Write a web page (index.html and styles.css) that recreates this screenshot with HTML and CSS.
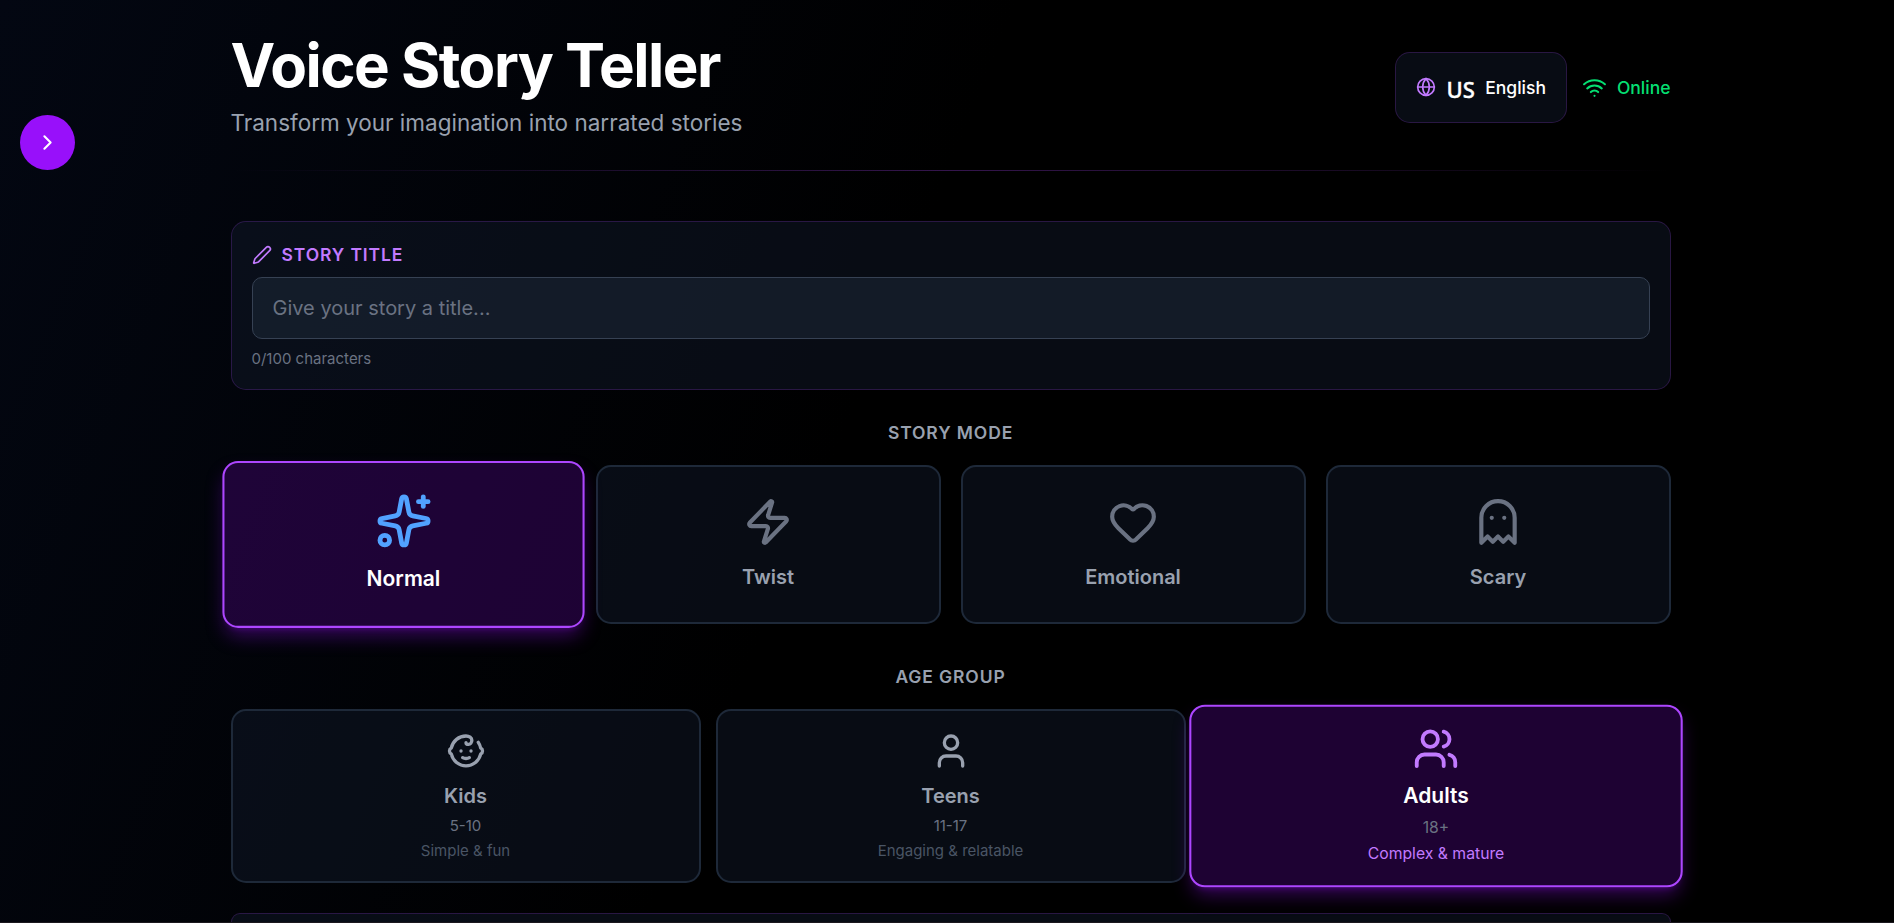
FILE: index.html
```
<!DOCTYPE html>
<html lang="en">
<head>
<meta charset="utf-8">
<title>Voice Story Teller</title>
<link rel="stylesheet" href="styles.css">
</head>
<body>
<button class="drawer-toggle" aria-label="Open menu"><svg class="icon icon-md" viewBox="0 0 24 24"><path d="m9 18 6-6-6-6"/></svg></button>
<main class="page">
  <header class="header">
    <div>
      <h1 class="title">Voice Story Teller</h1>
      <p class="subtitle">Transform your imagination into narrated stories</p>
    </div>
    <div class="header-tools">
      <button class="language">
        <svg class="icon icon-sm accent" viewBox="0 0 24 24"><circle cx="12" cy="12" r="10"/><path d="M12 2a14.5 14.5 0 0 0 0 20 14.5 14.5 0 0 0 0-20"/><path d="M2 12h20"/></svg>
        <span class="flag">US</span>
        <span>English</span>
      </button>
      <div class="status">
        <svg class="icon icon-md" viewBox="0 0 24 24"><path d="M12 20h.01"/><path d="M2 8.82a15 15 0 0 1 20 0"/><path d="M5 12.859a10 10 0 0 1 14 0"/><path d="M8.5 16.429a5 5 0 0 1 7 0"/></svg>
        <span>Online</span>
      </div>
    </div>
  </header>
  <div class="divider"></div>

  <section class="panel">
    <label class="panel-label" for="story-title">
      <svg class="icon icon-sm" viewBox="0 0 24 24"><path d="M21.174 6.812a1 1 0 0 0-3.986-3.987L3.842 16.174a2 2 0 0 0-.5.83l-1.321 4.352a.5.5 0 0 0 .623.622l4.353-1.32a2 2 0 0 0 .83-.497z"/></svg>
      <span>STORY TITLE</span>
    </label>
    <input class="title-input" id="story-title" type="text" maxlength="100" placeholder="Give your story a title...">
    <p class="counter">0/100 characters</p>
  </section>

  <section class="section modes-section">
    <h2 class="section-label">STORY MODE</h2>
    <div class="modes">
      <button class="card mode selected">
        <svg class="icon icon-xl sparkle" viewBox="0 0 24 24"><path d="M11.017 2.814a1 1 0 0 1 1.966 0l1.051 5.558a2 2 0 0 0 1.594 1.594l5.558 1.051a1 1 0 0 1 0 1.966l-5.558 1.051a2 2 0 0 0-1.594 1.594l-1.051 5.558a1 1 0 0 1-1.966 0l-1.051-5.558a2 2 0 0 0-1.594-1.594l-5.558-1.051a1 1 0 0 1 0-1.966l5.558-1.051a2 2 0 0 0 1.594-1.594z"/><path d="M20 2v4"/><path d="M22 4h-4"/><circle cx="4" cy="20" r="2"/></svg>
        <span class="card-name">Normal</span>
      </button>
      <button class="card mode">
        <svg class="icon icon-xl" viewBox="0 0 24 24"><path d="M4 14a1 1 0 0 1-.78-1.63l9.9-10.2a.5.5 0 0 1 .86.46l-1.92 6.02A1 1 0 0 0 13 10h7a1 1 0 0 1 .78 1.63l-9.9 10.2a.5.5 0 0 1-.86-.46l1.92-6.02A1 1 0 0 0 11 14z"/></svg>
        <span class="card-name">Twist</span>
      </button>
      <button class="card mode">
        <svg class="icon icon-xl" viewBox="0 0 24 24"><path d="M2 9.5a5.5 5.5 0 0 1 9.591-3.676.56.56 0 0 0 .818 0A5.49 5.49 0 0 1 22 9.5c0 2.29-1.5 4-3 5.5l-5.492 5.313a2 2 0 0 1-3 .019L5 15c-1.5-1.5-3-3.2-3-5.5"/></svg>
        <span class="card-name">Emotional</span>
      </button>
      <button class="card mode">
        <svg class="icon icon-xl" viewBox="0 0 24 24"><path d="M9 10h.01"/><path d="M15 10h.01"/><path d="M12 2a8 8 0 0 0-8 8v12l3-3 2.5 2.5L12 19l2.5 2.5L17 19l3 3V10a8 8 0 0 0-8-8z"/></svg>
        <span class="card-name">Scary</span>
      </button>
    </div>
  </section>

  <section class="section ages-section">
    <h2 class="section-label">AGE GROUP</h2>
    <div class="ages">
      <button class="card age">
        <svg class="icon icon-lg" viewBox="0 0 24 24"><path d="M10 16c.5.3 1.2.5 2 .5s1.5-.2 2-.5"/><path d="M15 12h.01"/><path d="M19.38 6.813A9 9 0 0 1 20.8 10.2a2 2 0 0 1 0 3.6 9 9 0 0 1-17.6 0 2 2 0 0 1 0-3.6A9 9 0 0 1 12 3c2 0 3.5 1.1 3.5 2.5s-.9 2.5-2 2.5c-.8 0-1.5-.4-1.5-1"/><path d="M9 12h.01"/></svg>
        <span class="card-name">Kids</span>
        <span class="range">5-10</span>
        <span class="hint">Simple &amp; fun</span>
      </button>
      <button class="card age">
        <svg class="icon icon-lg" viewBox="0 0 24 24"><path d="M19 21v-2a4 4 0 0 0-4-4H9a4 4 0 0 0-4 4v2"/><circle cx="12" cy="7" r="4"/></svg>
        <span class="card-name">Teens</span>
        <span class="range">11-17</span>
        <span class="hint">Engaging &amp; relatable</span>
      </button>
      <button class="card age selected">
        <svg class="icon icon-lg" viewBox="0 0 24 24"><path d="M16 21v-2a4 4 0 0 0-4-4H6a4 4 0 0 0-4 4v2"/><path d="M16 3.128a4 4 0 0 1 0 7.744"/><path d="M22 21v-2a4 4 0 0 0-3-3.87"/><circle cx="9" cy="7" r="4"/></svg>
        <span class="card-name">Adults</span>
        <span class="range">18+</span>
        <span class="hint">Complex &amp; mature</span>
      </button>
    </div>
  </section>

  <section class="panel panel-next"></section>
</main>
</body>
</html>
```
FILE: styles.css
```
* { box-sizing: border-box; margin: 0; }
html { font-size: 20px; background: #000; }
body {
  height: 923px;
  overflow: hidden;
  border-bottom: 1px solid #1b181e;
  background: linear-gradient(112deg, #030712, #000 45%, #000);
  color: #fff;
  font-family: Inter, "Liberation Sans", sans-serif;
}
button { font: inherit; color: inherit; padding: 0; }

.icon { flex: none; fill: none; stroke: currentColor; stroke-width: 2; stroke-linecap: round; stroke-linejoin: round; }
.icon-sm { width: 1rem; height: 1rem; }
.icon-md { width: 1.25rem; height: 1.25rem; }
.icon-lg { width: 2rem; height: 2rem; }
.icon-xl { width: 2.5rem; height: 2.5rem; }
.accent { color: #c27aff; }

.drawer-toggle {
  position: fixed;
  top: 115px;
  left: 20px;
  width: 55px;
  height: 55px;
  display: grid;
  place-items: center;
  border: 0;
  border-radius: 50%;
  background: #9810fa;
}

.page { width: 72rem; margin-left: 230.5px; padding-top: 35px; }
.header { display: flex; align-items: center; justify-content: space-between; height: 105px; }
.title { font-size: 3rem; line-height: 1; font-weight: 700; letter-spacing: -0.025em; }
.subtitle { margin-top: 10px; font-size: 1.125rem; line-height: 1.75rem; color: #99a1af; }
.header-tools { display: flex; align-items: center; gap: 15px; font-size: 0.875rem; line-height: 1.25rem; font-weight: 500; }
.language {
  display: flex;
  align-items: center;
  gap: 10px;
  height: 71px;
  padding: 0 20px;
  border: 1px solid rgba(173, 70, 255, 0.2);
  border-radius: 0.75rem;
  background: rgba(16, 24, 40, 0.5);
}
.language .icon { margin-bottom: 1px; }
.flag { width: 29px; font-family: "Noto Sans", sans-serif; font-size: 22px; font-weight: 500; padding-top: 4px; -webkit-text-stroke: 0.4px currentColor; }
.status { display: flex; align-items: center; gap: 10px; color: #05df72; }
.divider { height: 1px; margin: 30px 0 50px; background: linear-gradient(to right, transparent, rgba(173, 70, 255, 0.3), transparent); }

.panel { padding: 20px; border: 1px solid rgba(173, 70, 255, 0.2); border-radius: 0.75rem; background: rgba(16, 24, 40, 0.5); }
.panel-label {
  display: flex;
  align-items: center;
  gap: 10px;
  margin-bottom: 10px;
  color: #c27aff;
  font-size: 0.875rem;
  line-height: 1.25rem;
  font-weight: 600;
  letter-spacing: 0.05em;
}
.title-input {
  display: block;
  width: 100%;
  height: 62px;
  padding: 0 20px;
  border: 1px solid #364153;
  border-radius: 0.5rem;
  background: rgba(30, 41, 57, 0.5);
  color: #fff;
  font: 400 1rem/1.5 Inter, "Liberation Sans", sans-serif;
}
.title-input::placeholder { color: #6a7282; }
.counter { margin-top: 10px; font-size: 0.75rem; line-height: 1rem; color: #6a7282; }

.section-label { margin-bottom: 20px; text-align: center; color: #99a1af; font-size: 0.875rem; line-height: 1.25rem; font-weight: 600; letter-spacing: 0.05em; }
.modes-section { margin-top: 30px; }
.ages-section { margin-top: 40px; }
.modes { display: grid; grid-template-columns: repeat(4, 1fr); gap: 1rem; }
.ages { display: grid; grid-template-columns: repeat(3, 1fr); gap: 0.75rem; }
.card {
  display: flex;
  flex-direction: column;
  align-items: center;
  border: 2px solid #1e2939;
  border-radius: 0.75rem;
  background: rgba(16, 24, 40, 0.5);
  color: #99a1af;
}
.mode { padding: 30px 0; gap: 15px; }
.mode .icon { color: #6a7282; }
.age { padding: 20px 0; }
.age .card-name { margin-top: 10px; }
.card-name { font-size: 1rem; line-height: 1.5; font-weight: 600; }
.range { margin-top: 5px; font-size: 0.75rem; line-height: 1rem; color: #6a7282; }
.hint { margin-top: 5px; font-size: 0.75rem; line-height: 1rem; color: #4a5565; }

.card.selected {
  transform: scale(1.05);
  border-color: #ad46ff;
  background: rgba(60, 3, 102, 0.5);
  color: #fff;
  box-shadow: 0 10px 18px -3px rgba(152, 16, 250, 0.34), 0 4px 6px -4px rgba(152, 16, 250, 0.3);
}
.selected .icon { transform: scale(1.1); }
.mode.selected .sparkle { color: #51a2ff; }
.age.selected .icon, .age.selected .hint { color: #c27aff; }

.panel-next { margin-top: 30px; height: 9px; padding: 0; border-bottom: 0; border-radius: 0.75rem 0.75rem 0 0; }
```
